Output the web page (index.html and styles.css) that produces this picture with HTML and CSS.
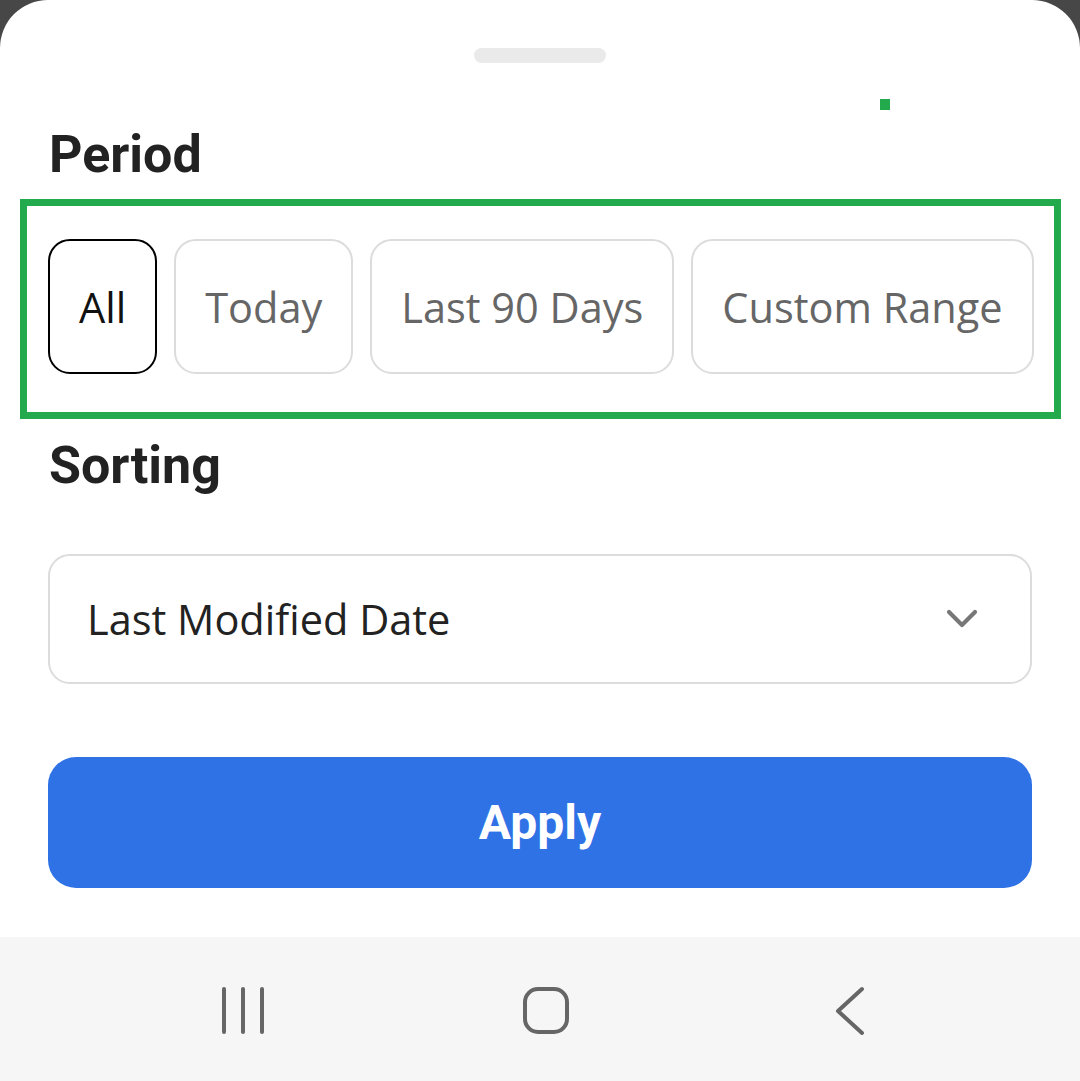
FILE: index.html
```html
<!DOCTYPE html>
<html lang="en">
<head>
<meta charset="utf-8">
<title>Filter</title>
<link rel="stylesheet" href="styles.css">
</head>
<body>
<div class="screen">
  <div class="sheet">
    <div class="handle"></div>
    <span class="dot"></span>
    <h2 class="heading heading-period">Period</h2>
    <div class="chips">
      <button class="chip chip-active">All</button>
      <button class="chip">Today</button>
      <button class="chip">Last 90 Days</button>
      <button class="chip">Custom Range</button>
    </div>
    <h2 class="heading heading-sorting">Sorting</h2>
    <div class="select">
      <span class="select-text">Last Modified Date</span>
      <svg class="chevron" width="32" height="22" viewBox="0 0 32 22"><path d="M3 4 L16 17 L29 4" fill="none" stroke="#777" stroke-width="4.2" stroke-linecap="round" stroke-linejoin="round"/></svg>
    </div>
    <button class="apply">Apply</button>
  </div>
  <nav class="navbar">
    <svg class="nav-icon" width="48" height="50" viewBox="0 0 48 50"><g stroke="#666" stroke-width="4" stroke-linecap="round"><path d="M5 3 V46"/><path d="M24 3 V46"/><path d="M43 3 V46"/></g></svg>
    <svg class="nav-icon" width="50" height="50" viewBox="0 0 50 50"><rect x="4" y="3" width="42" height="43" rx="13" fill="none" stroke="#666" stroke-width="4"/></svg>
    <svg class="nav-icon" width="40" height="50" viewBox="0 0 40 50"><path d="M37 3 L13 25 L37 47" fill="none" stroke="#666" stroke-width="4" stroke-linecap="round" stroke-linejoin="round"/></svg>
  </nav>
</div>
</body>
</html>
```

FILE: styles.css
```css
* { box-sizing: border-box; }
html, body { margin: 0; padding: 0; }
body {
  background: #474747;
  width: 1080px;
  height: 1081px;
  overflow: hidden;
}
.screen {
  display: flex;
  flex-direction: column;
  height: 1081px;
}
.sheet {
  position: relative;
  background: #fff;
  border-radius: 48px 48px 0 0;
  height: 937px;
  padding: 48px 48px 0 48px;
  display: flex;
  flex-direction: column;
}
.handle {
  width: 132px;
  height: 15px;
  border-radius: 8px;
  background: #eaeaea;
  align-self: center;
}
.dot {
  position: absolute;
  left: 880px;
  top: 99px;
  width: 10px;
  height: 11px;
  background: #22aa4c;
}
.heading {
  margin: 0;
  font-family: Roboto, "Liberation Sans", sans-serif;
  font-weight: 700;
  font-size: 52px;
  line-height: 1;
  color: #222;
  padding-left: 1px;
}
.heading-period { margin-top: 66px; }
.heading-sorting { margin-top: 66px; }
.chips {
  position: relative;
  display: flex;
  gap: 17px;
  margin-top: 58px;
}
.chips::before {
  content: "";
  position: absolute;
  left: -28px;
  top: -40px;
  right: -29px;
  bottom: -45px;
  border: 7px solid #22aa4c;
  pointer-events: none;
}
.chip {
  height: 135px;
  padding: 0 29px;
  border: 2px solid #dcdcdc;
  border-radius: 22px;
  background: #fff;
  font-family: "Open Sans", "Noto Sans", sans-serif;
  font-size: 41.5px;
  color: #666;
  display: flex;
  align-items: center;
  justify-content: center;
  white-space: nowrap;
}
.chip-active {
  border-color: #000;
  color: #111;
}
.select {
  margin-top: 62px;
  height: 130px;
  border: 2px solid #dcdcdc;
  border-radius: 22px;
  display: flex;
  align-items: center;
  justify-content: space-between;
  padding: 0 52px 0 37px;
}
.select-text {
  font-family: "Open Sans", "Noto Sans", sans-serif;
  font-size: 41.5px;
  color: #222;
}
.chevron { display: block; }
.apply {
  margin-top: 73px;
  height: 131px;
  border: none;
  border-radius: 28px;
  background: #2f72e6;
  color: #fff;
  font-family: Roboto, "Liberation Sans", sans-serif;
  font-weight: 700;
  font-size: 48px;
  width: 100%;
}
.navbar {
  flex: 1;
  background: #f6f6f6;
  display: flex;
  align-items: center;
  gap: 254px;
  padding: 3px 0 0 219px;
}
.nav-icon { display: block; }
```
